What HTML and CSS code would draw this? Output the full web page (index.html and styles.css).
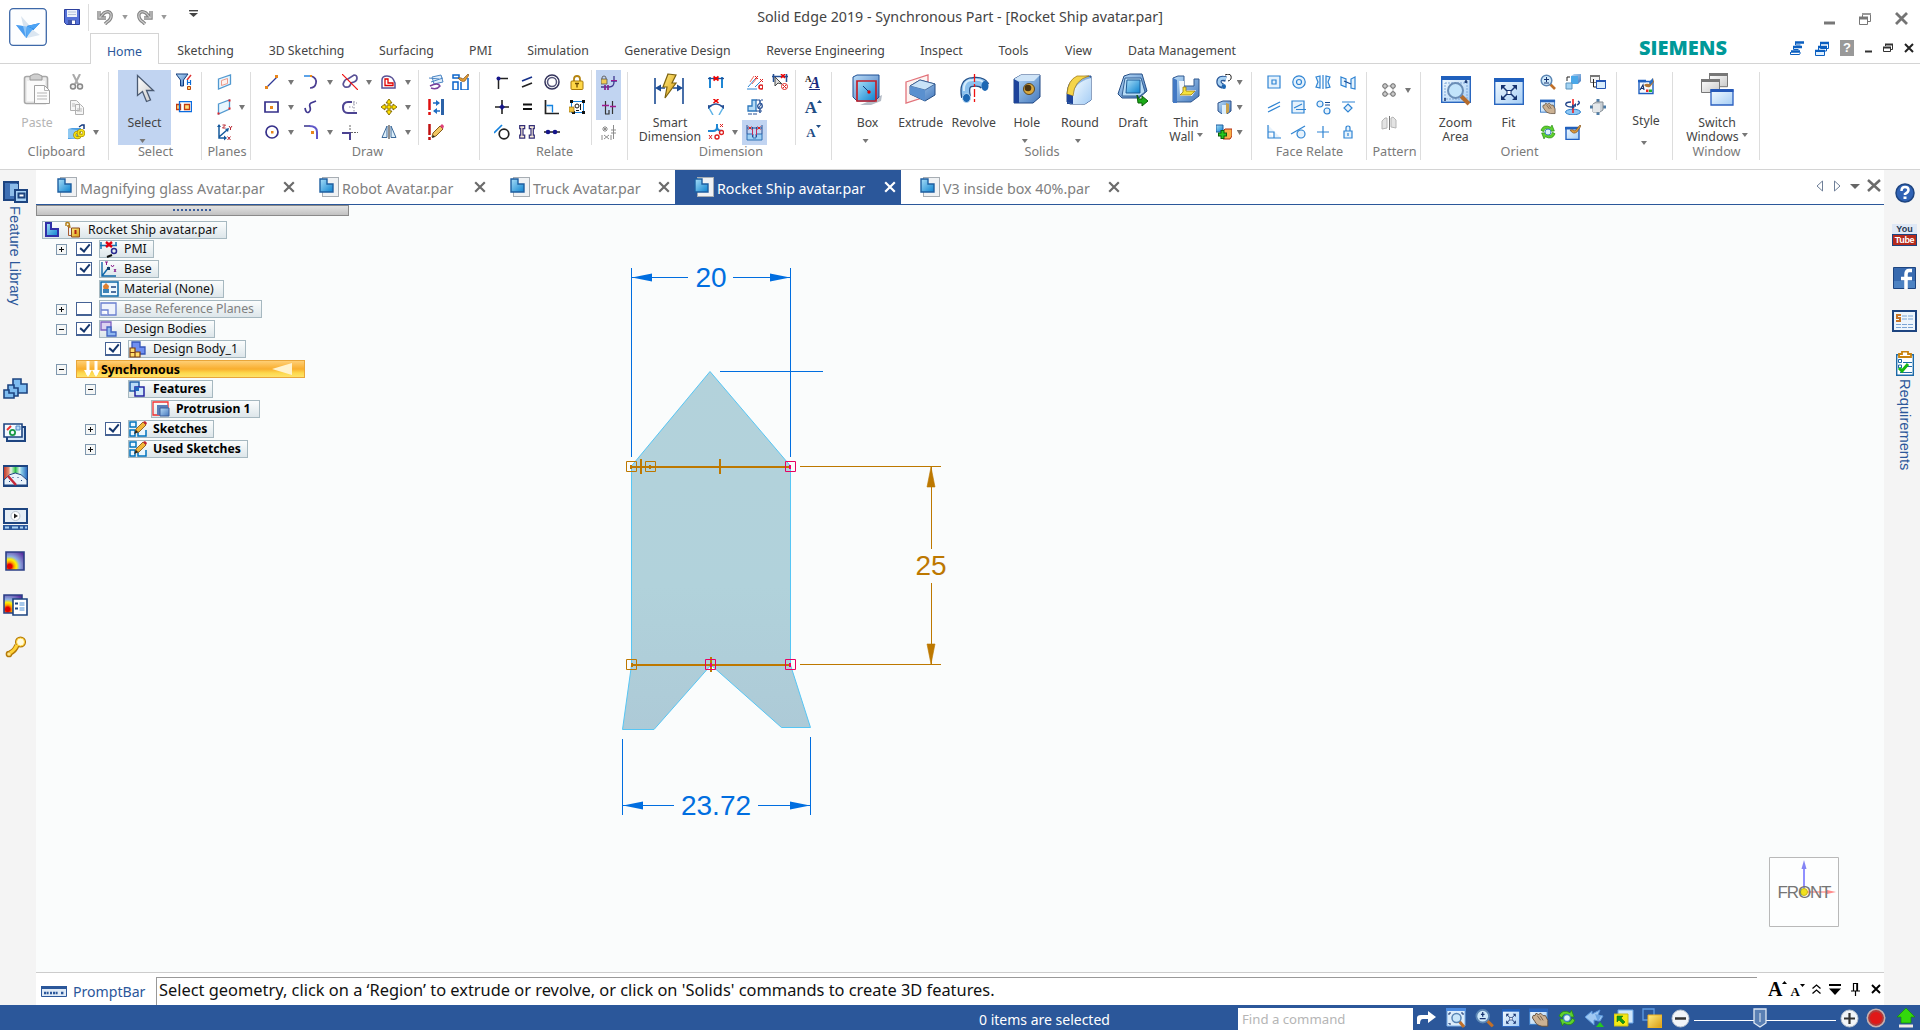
FILE: index.html
```html
<!DOCTYPE html>
<html lang="en">
<head>
<meta charset="utf-8">
<title>Solid Edge 2019 - Synchronous Part - [Rocket Ship avatar.par]</title>
<link rel="stylesheet" href="styles.css">
</head>
<body>
<svg class="defs" width="0" height="0" aria-hidden="true">
  <defs>
    <linearGradient id="lb" x1="0" y1="0" x2="1" y2="1"><stop offset="0" stop-color="#f4fbff"/><stop offset="1" stop-color="#a5cdf5"/></linearGradient>
    <linearGradient id="mb" x1="0" y1="0" x2="1" y2="1"><stop offset="0" stop-color="#b9dcf8"/><stop offset="1" stop-color="#4478bd"/></linearGradient>
    <linearGradient id="cy" x1="0" y1="0" x2="1" y2="1"><stop offset="0" stop-color="#a9def8"/><stop offset="1" stop-color="#0c82cf"/></linearGradient>
    <linearGradient id="gr" x1="0" y1="0" x2="1" y2="1"><stop offset="0" stop-color="#ffffff"/><stop offset="1" stop-color="#c9c9c9"/></linearGradient>
    <linearGradient id="ye" x1="0" y1="0" x2="1" y2="1"><stop offset="0" stop-color="#ffec80"/><stop offset="1" stop-color="#d79a12"/></linearGradient>
    <linearGradient id="body" x1="0" y1="0" x2="0" y2="1"><stop offset="0" stop-color="#b3d2db"/><stop offset=".6" stop-color="#b1d2db"/><stop offset="1" stop-color="#adcad7"/></linearGradient>
    <radialGradient id="heat" cx=".2" cy=".8" r="1"><stop offset=".12" stop-color="#e00000"/><stop offset=".24" stop-color="#ff9d00"/><stop offset=".38" stop-color="#fff200"/><stop offset=".55" stop-color="#8fb0e0"/><stop offset="1" stop-color="#5b2fa0"/></radialGradient>
    <linearGradient id="rainbow"><stop offset="0" stop-color="#c0392b"/><stop offset=".2" stop-color="#e08a70"/><stop offset=".3" stop-color="#e9f4ea"/><stop offset=".5" stop-color="#2fbf4a"/><stop offset=".68" stop-color="#d8f0ee"/><stop offset=".75" stop-color="#8ed0e8"/><stop offset="1" stop-color="#2b6cc0"/></linearGradient>
    <symbol id="mag" viewBox="0 0 16 16"><path d="M10 10l5 5" stroke="#c0702a" stroke-width="2.6"/><circle cx="6.500" cy="6.500" r="5.300" fill="#cfe9fa" stroke="#5b86b4" stroke-width="1.500"/></symbol>
    <symbol id="part" viewBox="0 0 20 20"><rect x="3.500" y=".5" width="16" height="19" fill="#f0f2f4" stroke="#a7adb3"/><path d="M1 2h7v5h6v8H1z" fill="url(#cy)" stroke="#1f5fa0" stroke-width="1.400"/></symbol>
    <symbol id="recycle" viewBox="0 0 16 16"><g transform="rotate(30 8 8)"><path d="M1 10Q0 3 8 2.500V0l5 4-5 3V5Q3 5 4 10zM15 6q1 7-7 7.500V16l-5-4 5-3v2q5 0 4-5z" fill="#5ed02e" stroke="#218a0c" stroke-width=".6"/></g><circle cx="8" cy="8" r="3" fill="#dff1fb" stroke="#3d85c0"/></symbol>
    <symbol id="cross" viewBox="0 0 10 10"><path d="M1 1l8 8M9 1L1 9" stroke="currentColor" stroke-width="1.800"/></symbol>
    <symbol id="handwin" viewBox="0 0 18 16"><rect x=".5" y=".5" width="15" height="13" fill="url(#lb)" stroke="#3f7cc4"/><path d="M0 0h16v3H0z" fill="#2a66bf"/><path d="M3 8q0-3 2-2l1-2 2 1 2-1 2 2 2 0 2 4v5h-5Q6 14 5 11z" fill="#cbb193" stroke="#5f4d3c" stroke-width=".8"/><path d="M7 6l3 4M9.500 6l2.500 4" stroke="#5f4d3c" stroke-width=".7"/></symbol>
    <symbol id="fitwin" viewBox="0 0 30 27"><rect x=".7" y=".7" width="28.600" height="25.600" fill="url(#lb)" stroke="#2a66bf" stroke-width="1.400"/><path d="M0 0h30v4H0z" fill="#2060bd"/><path d="M9 9l4 4M21 9l-4 4M9 20l4-4M21 20l-4-4" stroke="#163370" stroke-width="1.500"/><path d="M7 7h5L7 12zM23 7v5l-5-5zM7 22v-5l5 5zM23 22h-5l5-5z" fill="#163370"/><rect x="13" y="12.500" width="4" height="4" fill="#fff" stroke="#163370"/></symbol>
    <symbol id="sketch" viewBox="0 0 18 16"><path d="M1 1h6v5H1zM1 9h5v6H1zM9 9v6h8V9" fill="#eaf6fd" stroke="#0073bd" stroke-width="1.500"/><path d="M6 12l1-4 7-7 3 3-7 7z" fill="#f2b63a" stroke="#7b4a10" stroke-width=".8"/><path d="M14 1l2-1 2 2-1 2z" fill="#c5252f"/><path d="M5 13l2-4 2 2z" fill="#222"/></symbol>
  </defs>
</svg>

<div class="app">
  <header class="title">
    <div class="quick">
      <svg class="q-save" width="16" height="16"><path d="M.5.5h15v15h-13l-2-2z" fill="#5572d8" stroke="#2c3f9c"/><path d="M3 1h10v7H3z" fill="#eef3fb"/><path d="M4 3h8M4 5.500h8" stroke="#b5c3da"/><path d="M4 11h8v4H4z" fill="#4156a8"/><path d="M8 11.500h3V15H8z" fill="#fff"/></svg>
      <i class="q-sep"></i>
      <svg class="q-undo" width="17" height="16"><path d="M2 2v7h7M3 8.500L7 4q5-3 7 1 1 5-4 8l-2 2" fill="none" stroke="#858585" stroke-width="3.400"/><path d="M2 2v7h7M3 8.500L7 4q5-3 7 1 1 5-4 8l-2 2" fill="none" stroke="#d0d0d0" stroke-width="1.100"/></svg>
      <i class="arr light"></i>
      <svg class="q-redo" width="17" height="16"><g transform="translate(17 0) scale(-1 1)"><path d="M2 2v7h7M3 8.500L7 4q5-3 7 1 1 5-4 8l-2 2" fill="none" stroke="#858585" stroke-width="3.400"/><path d="M2 2v7h7M3 8.500L7 4q5-3 7 1 1 5-4 8l-2 2" fill="none" stroke="#d0d0d0" stroke-width="1.100"/></g></svg>
      <i class="arr light"></i>
      <svg class="q-more" width="9" height="7"><path d="M0 .7h9" stroke="#444" stroke-width="1.400"/><path d="M0 3h9L4.500 7z" fill="#444"/></svg>
    </div>
    <h1>Solid Edge 2019 - Synchronous Part - [Rocket Ship avatar.par]</h1>
    <div class="winctl">
      <svg width="11" height="12"><path d="M0 10h11" stroke="#777" stroke-width="3"/></svg>
      <svg width="12" height="14"><path d="M3.500 5V1.500h8v8H9" fill="none" stroke="#777"/><path d="M3 2h9" stroke="#999" stroke-width="2"/><path d="M.5 5.500h8v7h-8z" fill="#fff" stroke="#777"/><path d="M0 6h9" stroke="#777" stroke-width="3"/></svg>
      <svg width="13" height="13"><path d="M1 1l11 11M12 1L1 12" stroke="#747474" stroke-width="2.800"/></svg>
    </div>
  </header>

  <svg class="logo" width="38" height="38"><rect x=".7" y=".7" width="36.600" height="36.600" rx="3.500" fill="#fdfeff" stroke="#3d68a8" stroke-width="1.300"/><path d="M12 8l9 10-4 12z" fill="#d8e3ef"/><path d="M7 17l14 2-3 11z" fill="#8cc4f7"/><path d="M7 17l10 13-3-12z" fill="#4b9df0"/><path d="M18 18l13-3-14 15z" fill="#1778e2"/><path d="M18 18l13-3-6 6z" fill="#4ca3f5"/><path d="M21 20l10 7-13 3z" fill="#dbe6f1"/><path d="M18 18l6 3-7 9z" fill="#57aaf5"/></svg>

  <nav class="tabs">
    <a class="on">Home</a><a class="t2">Sketching</a><a class="t3">3D Sketching</a><a class="t4">Surfacing</a><a class="t5">PMI</a><a class="t6">Simulation</a><a class="t7">Generative Design</a><a class="t8">Reverse Engineering</a><a class="t9">Inspect</a><a class="t10">Tools</a><a class="t11">View</a><a class="t12">Data Management</a>
    <b class="siemens">SIEMENS</b>
    <div class="mdi">
      <svg width="14" height="15"><path d="M5 1.500h9M3 6h9M1 10.500h9" stroke="#0b5fc0" stroke-width="2.600"/><path d="M5.500 2v2h5M3.500 7v1.500h5M.5 11v2.500h9l1-2" fill="none" stroke="#0b5fc0"/></svg>
      <svg width="14" height="15"><path d="M5.500 1.500h8v6h-8z" fill="#fff" stroke="#0b5fc0"/><path d="M5 2h9M3 6h9M0 10h10" stroke="#0b5fc0" stroke-width="2.600"/><path d="M3.500 6h8v4h-8z" fill="none" stroke="#0b5fc0"/><path d="M.5 10h9v4.500h-9z" fill="#dff0ff" stroke="#0b5fc0"/><path d="M0 10h10" stroke="#0b5fc0" stroke-width="2"/></svg>
      <span class="help">?</span>
      <svg width="7" height="12"><path d="M0 9.500h7" stroke="#333" stroke-width="2"/></svg>
      <svg width="10" height="10"><path d="M2.500 3V1.500h7v5H8" fill="none" stroke="#333"/><path d="M2 1.500h8" stroke="#333" stroke-width="2"/><path d="M.5 4.500h7v4h-7z" fill="#fff" stroke="#333"/><path d="M0 4.500h8" stroke="#333" stroke-width="2"/></svg>
      <svg width="10" height="10"><path d="M1 1l8 8M9 1L1 9" stroke="#222" stroke-width="2"/></svg>
    </div>
  </nav>

  <section class="ribbon">
    <div class="group clip">
      <div class="body">
        <div class="big dim"><svg width="28" height="33"><rect x="1.500" y="3.500" width="23" height="27" rx="2" fill="#ececec" stroke="#a8a8a8" stroke-width="1.600"/><path d="M7 7V3l4-2h4l4 2v4z" fill="#cfcfcf" stroke="#999"/><path d="M4 8h18v20H4z" fill="#fafafa"/><path d="M11.500 12.500h10l5 5v13h-15z" fill="#fcfcfc" stroke="#a0a0a0"/><path d="M21.500 12.500v5h5M14 20h10M14 23h10M14 26h10" fill="none" stroke="#b5b5b5"/></svg><span>Paste</span></div>
        <div class="grid">
          <svg width="16" height="16"><path d="M4 0l5 10M11 0L6 10" stroke="#aaa" stroke-width="2"/><circle cx="4" cy="12.500" r="2.500" fill="#eee" stroke="#888" stroke-width="1.500"/><circle cx="11" cy="12.500" r="2.500" fill="#eee" stroke="#888" stroke-width="1.500"/></svg><i></i>
          <svg width="16" height="16"><path d="M1.500 1.500h6l3 3v7h-9zM6.500 5.500h5l3 3v7h-8z" fill="#f6f6f6" stroke="#b0b0b0"/><path d="M8 10h5M8 12h5M3 5h3M3 7h3" stroke="#bbb"/></svg><i></i>
          <svg width="17" height="16"><path d="M0 5l4-1h9v10l-3 1H0z" fill="#4d9fe2"/><path d="M0 5l9 1v9l-9-1z" fill="#8fc9f2"/><path d="M11 3l3-2h2v4" fill="none" stroke="#143a80" stroke-width="1.500"/><circle cx="9.500" cy="11" r="2.800" fill="none" stroke="#a98b00" stroke-width="3"/><circle cx="9.500" cy="11" r="2.800" fill="none" stroke="#f3e214" stroke-width="1.500"/><circle cx="13" cy="9" r="2.800" fill="none" stroke="#a98b00" stroke-width="2.600"/><circle cx="13" cy="9" r="2.800" fill="none" stroke="#f3e214" stroke-width="1.400"/></svg><i class="arr"></i>
        </div>
      </div>
      <h2>Clipboard</h2>
    </div>

    <div class="group sel">
      <div class="body">
        <div class="big hot"><svg width="18" height="30"><path d="M1.500 1.500v20l5-4 4 10 4-1.500-4-9.500 7 0z" fill="url(#gr)" stroke="#4a5a72" stroke-width="1.300"/></svg><span>Select</span><i class="arr"></i></div>
        <div class="grid">
          <svg width="16" height="18"><path d="M0 1h12L7.500 7v6h-3V7z" fill="url(#mb)" stroke="#123c7c"/><path d="M15 2l-4 5" stroke="#d33" stroke-width="1.500"/><path d="M11.500 7v5M14.500 7v5M11 9.500h4" stroke="#0a6cd6" stroke-width="1.200"/><path d="M11.500 13.500h3v3h-3z" fill="#ffd56a" stroke="#b5460f"/></svg>
          <svg width="16" height="12"><path d="M.5 3.500h4v5h-4zM8.500 3.500h5v5h-5z" fill="#ffdd7a" stroke="#c23a10" stroke-width="1.300"/><path d="M3.500.7h12v10h-12z" fill="none" stroke="#0a6be0" stroke-width="1.300"/></svg>
          <i></i>
        </div>
      </div>
      <h2>Select</h2>
    </div>

    <div class="group planes">
      <div class="body"><div class="grid">
        <svg width="15" height="16"><path d="M1.500 5l12-4v9l-12 5z" fill="#eaf6fe" stroke="#5299d0" stroke-width="1.300"/><path d="M4.500 6.500l6-2v5l-6 2z" fill="#fff2ee" stroke="#eb9b8c"/></svg><i></i>
        <svg width="15" height="16"><path d="M1.500 5l11-4v9l-11 5z" fill="#eaf6fe" stroke="#5299d0" stroke-width="1.300"/><path d="M11.500.5h2v2h-2zM11.500 8.500h2v2h-2zM.5 13.500h2v2H.5z" fill="#e22"/></svg><i class="arr"></i>
        <svg width="16" height="17"><path d="M2 1v13h6M2 13l8-7" fill="none" stroke="#15599c" stroke-width="1.500"/><path d="M0 3l2-3 2 3zM7 11.500v5l3-2.500zM8 5l4-1-1 4z" fill="#15599c"/><path d="M5.500 1h3l-3 3h3M12 2l1.500 2L15 2M13.500 4v2M10.500 12.500l3 3.500M13.500 12.500l-3 3.500" fill="none" stroke="#b72630"/></svg><i></i>
      </div></div>
      <h2>Planes</h2>
    </div>

    <div class="group draw">
      <div class="body"><div class="grid">
        <svg width="14" height="14"><path d="M2 12L12 2" stroke="#303a96" stroke-width="1.300"/><path d="M0 11h3v3H0zM10 0h3v3h-3z" fill="#e8861c"/></svg><i class="arr"></i>
        <svg width="16" height="14"><path d="M1 1h7" stroke="#2685e0" stroke-width="1.500"/><path d="M8 1q6 2 5 7-1 5-6 5" fill="none" stroke="#4c3f92" stroke-width="1.700"/><path d="M7 0h2v2H7z" fill="#f08a10"/></svg><i class="arr"></i>
        <svg width="16" height="16"><path d="M3 13q-3-2-1-5 1-3 4-3l6-4q3 0 3 3t-3 4l-3 1q-1 5-6 4z" fill="none" stroke="#5a5296" stroke-width="1.700"/><path d="M0 0l16 16" stroke="#f01010" stroke-width="1.200"/></svg><i class="arr"></i>
        <svg width="15" height="14"><path d="M1 13V5q0-4 5-4 6 0 8 7v5z" fill="#fff" stroke="#5a5296" stroke-width="1.500"/><path d="M4 10.500V4h3v4h5v2.500z" fill="#fff" stroke="#e00000" stroke-width="1.300"/></svg><i class="arr"></i>
        <svg width="15" height="12"><path d="M1 11V1h13v10z" fill="#fff" stroke="#36308a" stroke-width="1.700"/><path d="M6 5h3v3H6z" fill="#e8861c"/></svg><i class="arr"></i>
        <svg width="13" height="14"><path d="M1 8q1 6 4 4 2-1 1-5-1-3 1-4l5-2" fill="none" stroke="#3f3790" stroke-width="1.700"/></svg><i></i>
        <svg width="16" height="13"><path d="M10 1H6Q1 1 1 6.500T6 12h9" fill="none" stroke="#4c4392" stroke-width="2"/><path d="M12 0v11M7 6h4M11 2h4" stroke="#8a8aa0" stroke-dasharray="1.500 1.500"/></svg><i></i>
        <svg width="16" height="16"><path d="M8 0l3 4H9v3h3V5l4 3-4 3V9H9v3h2l-3 4-3-4h2V9H4v2L0 8l4-3v2h3V4H5z" fill="#ffe000" stroke="#7d6500" stroke-width=".9"/></svg><i class="arr"></i>
        <svg width="14" height="14"><circle cx="7" cy="7" r="6" fill="#fff" stroke="#36308a" stroke-width="1.700"/><path d="M6 6h2.500v2.500H6z" fill="#e8861c"/></svg><i class="arr"></i>
        <svg width="16" height="14"><path d="M1 1h6" stroke="#36308a" stroke-width="1.500"/><path d="M6 1q8 0 8 6v7" fill="none" stroke="#5f57c8" stroke-width="2"/><path d="M8 6h3v3H8z" fill="#e8861c"/></svg><i class="arr"></i>
        <svg width="16" height="15"><path d="M0 8h8v7" fill="none" stroke="#4c4392" stroke-width="2"/><path d="M8 0v6M9 7.500h7" stroke="#666" stroke-dasharray="2 1"/></svg><i></i>
        <svg width="16" height="14"><path d="M1 12.500L6 1v11.500zM15 12.500L10 1v11.500z" fill="#dceef9" stroke="#3d6a9a"/><path d="M8 0v14" stroke="#222"/></svg><i class="arr"></i>
      </div><i class="vs"></i><div class="grid two">
        <svg width="16" height="16"><path d="M4 3l9-2 2 7-9 2zM1 4l10 1M3 8l12-4" fill="#e2effb" stroke="#4c86c4"/><path d="M2 12q8-4 10 0-3 4-9 2" fill="none" stroke="#7a3f9c" stroke-width="1.500"/></svg>
        <svg width="17" height="16"><path d="M1 1h6v3H1zM1 8h5v8H1zM9 8v8h7V4" fill="#fff" stroke="#0b64ca" stroke-width="1.500"/><path d="M6 4q3-1 5 1l5-5 1 1-4 6q-3 2-7-3z" fill="#e09a30" stroke="#754310" stroke-width=".6"/></svg>
        <svg width="16" height="16"><path d="M1.500 0v11M1.500 13v3" stroke="#e01010" stroke-width="2.500"/><path d="M14.500 0v16" stroke="#2b62a8" stroke-width="3"/><path d="M5 4h6M12 12H6" stroke="#1f6ec4" stroke-width="1.600"/><path d="M8 1l4 3-4 3zM9 9l-4 3 4 3z" fill="#1f6ec4"/></svg><i></i>
        <svg width="16" height="16"><path d="M1.500 0v11M1.500 13v3" stroke="#c01010" stroke-width="2.500"/><path d="M4 13l1-4 7-7 3 3-7 7z" fill="#f1c763" stroke="#855b18"/><path d="M12 2l2-2 2 2-1 3z" fill="#e0407a"/><path d="M4 14l1-3 2 2z" fill="#222"/></svg><i></i>
      </div></div>
      <h2>Draw</h2>
    </div>

    <div class="group relate">
      <div class="body"><div class="grid">
        <svg width="12" height="13"><path d="M2.500 13V2.500H12" fill="none" stroke="#222" stroke-width="1.500"/><circle cx="2.500" cy="2.500" r="2" fill="#16168a"/></svg>
        <svg width="12" height="12"><path d="M1 5l10-4" stroke="#15308a" stroke-width="1.600"/><path d="M1 11l10-4" stroke="#222" stroke-width="1.600"/></svg>
        <svg width="16" height="16"><circle cx="8" cy="8" r="7" fill="#fff" stroke="#33335c" stroke-width="1.500"/><circle cx="8" cy="8" r="4.500" fill="#fff" stroke="#55557a" stroke-width="1.500"/></svg>
        <svg width="14" height="15"><path d="M4 6V4q0-3 3-3t3 3v2" fill="none" stroke="#b58512" stroke-width="1.800"/><rect x="1" y="6" width="12" height="8.500" rx="1" fill="#ffd848" stroke="#a87a0a"/><path d="M5 8.500h4M7 9v3.500" stroke="#6b4b00" stroke-width="1.300"/></svg>
        <svg width="14" height="14"><path d="M0 7h14M7 0v14" stroke="#222" stroke-width="1.600"/><path d="M4 7l3-3 3 3-3 3z" fill="#16168a"/></svg>
        <svg width="10" height="8"><path d="M1 1.500h9M1 6h9" stroke="#111" stroke-width="2"/></svg>
        <svg width="15" height="15"><path d="M1.500 0v13.500H15" fill="none" stroke="#222" stroke-width="1.700"/><path d="M2.500 5.500h6v7" fill="#e4f3fd" stroke="#1583e0" stroke-width="1.300"/></svg>
        <svg width="16" height="16"><rect x="2.500" y="2.500" width="12" height="11" fill="#fff" stroke="#1583e0"/><path d="M1 1h3v3H1zM13 1h3v3h-3zM13 12h3v3h-3zM3 12h3v3H3z" fill="#111"/><circle cx="8" cy="7" r="2" fill="none" stroke="#111"/><path d="M11.500 5v6M7 11.500h3" stroke="#111"/><path d="M0 8h5v5H0z" fill="#efc13c" stroke="#9b7310" stroke-width=".7"/></svg>
        <svg width="16" height="16"><path d="M0 9l8-8" stroke="#1583e0" stroke-width="1.700"/><circle cx="10" cy="10" r="4.800" fill="#fff" stroke="#222" stroke-width="1.700"/></svg>
        <svg width="16" height="14"><path d="M.7.7h5v3H4v6.500h1.700v3h-5v-3h1V3.700h-1zM15.300.7h-5v3H12v6.500h-1.700v3h5v-3h-1V3.700h1z" fill="#f7ead8" stroke="#342f78" stroke-width="1.200"/></svg>
        <svg width="16" height="8"><path d="M0 4h16" stroke="#111" stroke-width="1.400"/><circle cx="4" cy="4" r="2.300" fill="#16168a"/><circle cx="11" cy="4" r="2.300" fill="#16168a"/></svg>
        <i></i>
      </div><i class="vs"></i><div class="grid one">
        <span class="hl"><svg width="16" height="16"><path d="M3 4.500V3q0-2 2-2t2 2v2" transform="translate(-2 0)" fill="none" stroke="#666"/><path d="M0 4h6v5H0z" fill="#f2cb55" stroke="#555" stroke-width=".8"/><path d="M13 1v6q0 5-5 5H0M10 6h6M4 10v5M7 10v5" fill="none" stroke="#3f3790" stroke-width="1.300"/><path d="M4 10v5M7 10v5M10 5.500h6" stroke="#a01a90" stroke-width="1.200"/></svg></span>
        <span class="hl"><svg width="14" height="14"><path d="M3.500 0v13M10.500 0v13M3 13h4v-4" fill="none" stroke="#333" stroke-width="1.200"/><path d="M0 4.500h7M8 5.500h6" stroke="#a01a90" stroke-width="1.600"/></svg></span>
        <svg width="16" height="15"><path d="M1 4h6M4 1v6M2 2l4 4M6 2L2 6M12.500 0v14M10 5h5M10 8h5M1 10v5M10 10v5M3 10l5 4M8 10l-5 4" fill="none" stroke="#8c8c8c"/></svg>
      </div></div>
      <h2>Relate</h2>
    </div>

    <div class="group dimn">
      <div class="body">
        <div class="big"><svg width="30" height="31"><path d="M1 4v26M29 4v26" stroke="#1c4c94" stroke-width="1.600"/><path d="M3 14h8M19 14h8" stroke="#1c4c94" stroke-width="1.500"/><path d="M1 14l6-3.500v7zM29 14l-6-3.500v7z" fill="#1c4c94"/><path d="M14 0l8 1-4 8h4L11 24l2-11H9z" fill="url(#ye)" stroke="#7c6210" stroke-width="1.200"/></svg><span>Smart<br>Dimension</span></div>
        <div class="grid">
          <svg width="16" height="14"><path d="M2 2v11M14 2v11" stroke="#1f87d4" stroke-width="2"/><path d="M0 3.500h16" stroke="#254f94" stroke-width="1.300"/><path d="M5.500 1.500l5 4M10.500 1.500l-5 4" stroke="#e00" stroke-width="1.800"/></svg><i></i>
          <svg width="16" height="15"><path d="M1 12L8 4M8 12l5-5M0 14h10" stroke="#2c85d4"/><path d="M3 7l4-6M5 9l5-6" stroke="#ee6b60"/><path d="M8 1l3 3M11 1L8 4M13 4l3 3M16 4l-3 3" stroke="#d22" stroke-width="1"/><circle cx="14" cy="12" r="2" fill="none" stroke="#d22" stroke-width="1.600"/></svg>
          <svg width="16" height="16"><path d="M0 2.500h16M1.500 0v8M14.500 0v8" stroke="#254f94" stroke-width="1.500"/><path d="M9 0l4 4M13 0L9 4" stroke="#e00" stroke-width="1.500"/><path d="M3 3v9l3-3 4 1z" fill="#ddd" stroke="#444"/><circle cx="12.500" cy="12.500" r="3" fill="#fff" stroke="#d22"/><path d="M11 11l3 3M14 11l-3 3" stroke="#d22"/></svg>
          <svg width="16" height="16"><path d="M1 9l4 7M15 9l-4 7" stroke="#5cb2e6" stroke-width="1.500"/><path d="M0 9q8-8 16 0" fill="none" stroke="#254f94" stroke-width="1.500"/><path d="M0 10V6l4 1zM16 10V6l-4 1z" fill="#254f94"/><path d="M5.500 0l5 4M10.500 0l-5 4" stroke="#e00" stroke-width="1.600"/></svg><i></i>
          <svg width="16" height="16"><path d="M5 1h4v11H1V7h4z" fill="#b7dcf6" stroke="#2c78bd" stroke-width="1.300"/><path d="M9 1h7M9 12h6M1 15h9" stroke="#254f94" stroke-dasharray="4 1"/><path d="M13 1v3M13 10v4" stroke="#254f94" stroke-width="1.500"/><circle cx="13" cy="7" r="2.300" fill="none" stroke="#254f94" stroke-width="1.300"/><path d="M11 10l4-6" stroke="#254f94"/></svg><i></i>
          <svg width="16" height="16"><path d="M0 7h5q4 0 4-4V0M9 3q0 4 6 4" fill="none" stroke="#1f87d4" stroke-width="2"/><path d="M12 0l3 3M15 0l-3 3M1 11l3 4M4 11l-3 4" stroke="#d22"/><circle cx="13.500" cy="8.500" r="2" fill="#fff" stroke="#d22" stroke-width="1.400"/><circle cx="9" cy="13" r="2" fill="#fff" stroke="#d22" stroke-width="1.400"/></svg><i class="arr"></i>
          <span class="hl"><svg width="17" height="16"><path d="M1 9h6v4h3V9h6v6H1z" fill="#9ed0f4" stroke="#2c6fb4"/><path d="M1 0v9M6.500 2v10M10.500 2v10M16 0v9M1 3h15" fill="none" stroke="#254f94"/><path d="M6.500 4v6M10.500 4v6" stroke="#c22a5a"/><path d="M2.500 1.500l3 3M5.500 1.500l-3 3M11.500 1.500l3 3M14.500 1.500l-3 3" stroke="#d22"/></svg></span><i></i>
        </div>
        <i class="vs"></i>
        <div class="grid one serif">
          <span class="fa"><b>A</b><b>A</b></span>
          <span class="fb2"><b>A</b><svg width="5" height="3"><path d="M0 3h5L2.500 0z"/></svg></span>
          <span class="fb2 small"><b>A</b><svg width="5" height="3"><path d="M0 0h5L2.500 3z"/></svg></span>
        </div>
      </div>
      <h2>Dimension</h2>
    </div>

    <div class="group solids">
      <div class="body">
        <div class="big"><svg width="32" height="31"><path d="M20 26l10-5-1 6-10 4H8z" fill="#b5bcc6"/><path d="M1 3l4-2h22v22l-4 4H5l-4-4z" fill="url(#mb)" stroke="#1d4f94"/><path d="M5 7h19v20H5z" fill="url(#cy)" stroke="#c21f2a" stroke-width="1.700"/><path d="M11 12l6 6" stroke="#123a7c"/><circle cx="17" cy="18" r="1.700" fill="#d00"/></svg><span>Box</span><i class="arr"></i></div>
        <div class="big"><svg width="31" height="30"><path d="M1 8L23 1v21L1 29z" fill="#fdf3f1" stroke="#e2737b" stroke-width="1.300"/><path d="M5 12l10-6 15 4v11l-10 6-15-7z" fill="url(#mb)" stroke="#264f86"/><path d="M5 12l10-6 15 4-10 6z" fill="#c9e3f8" stroke="#264f86" stroke-width=".7"/><path d="M5 12l15 4v11L5 20z" fill="#5a90cf"/></svg><span>Extrude</span></div>
        <div class="big"><svg width="30" height="30"><path d="M7 23Q4 8 14 8q9-1 12 4" fill="none" stroke="#234f88" stroke-width="10"/><path d="M7 22Q4 8 14 8q9-1 12 4" fill="none" stroke="#8cc1ee" stroke-width="7.500"/><path d="M5 17Q4 6 14 6q7-1 10 2" fill="none" stroke="#d5ecfb" stroke-width="2"/><ellipse cx="26" cy="12" rx="3.500" ry="5" fill="#1d68b4"/><ellipse cx="7.500" cy="24" rx="4" ry="4.500" fill="#1d68b4" stroke="#b7d9f5"/><path d="M15.500 0v30" stroke="#e11" stroke-width="1.300" stroke-dasharray="8 2 3 2"/></svg><span>Revolve</span></div>
        <div class="big"><svg width="28" height="30"><path d="M1 5l7-4h19v22l-7 6H1z" fill="url(#mb)" stroke="#1f4684"/><path d="M1 5l5 3v21H1z" fill="#1e449a"/><path d="M1 5l7-4h19l-6 6H6z" fill="#cfe4f7"/><circle cx="16" cy="15" r="5.500" fill="#d9a940" stroke="#5b4822"/><circle cx="15" cy="14" r="3.300" fill="#4a3410"/></svg><span>Hole</span><i class="arr"></i></div>
        <div class="big"><svg width="30" height="31"><path d="M2 20h5v10H2z" fill="#1e449a"/><path d="M2 21Q2 7 12 3l14-1v24l-6 4H5l-3-2z" fill="url(#mb)" stroke="#1f4684"/><path d="M8 22Q9 8 26 4v22l-6 4H8z" fill="url(#lb)"/><path d="M2 20Q3 6 12 2h12Q9 6 8 22z" fill="#f5d54a" stroke="#a8801c" stroke-width=".8"/><path d="M2 20l6 2v8l-6-2z" fill="#1e449a"/></svg><span>Round</span><i class="arr"></i></div>
        <div class="big"><svg width="32" height="31"><path d="M7 2l6-2h12l5 17-8 7H5l-4-4z" fill="url(#mb)" stroke="#264f86"/><path d="M8 4h16l4 14-5 4H5z" fill="#b7dcf6" stroke="#335f94"/><path d="M10 6h13v13H9z" fill="url(#cy)" stroke="#1f5b97"/><path d="M20 21l2 4h3v-3l6 5-6 5v-3h-4z" fill="#1cab18" stroke="#0a5c08"/></svg><span>Draft</span></div>
        <div class="big"><svg width="28" height="29"><path d="M1 4l5-2h6v10h10V5h5v17l-8 6H1z" fill="url(#mb)" stroke="#30588f"/><path d="M1 4l4 2v23H1z" fill="#4379c4"/><path d="M7 7h5v9h12l-4 6H8z" fill="#eef6fd"/><path d="M11 13h3v4h9l-4 4H8l3-3z" fill="#f5e23c" stroke="#987a10" stroke-width=".8"/></svg><span>Thin<br>Wall <i class="arr in"></i></span></div>
        <div class="grid">
          <svg width="16" height="16"><path d="M10 5Q3 3 3 8q0 3 4 4" fill="none" stroke="#2a5898" stroke-width="5.500"/><path d="M10 4.500Q3 3 3 8q0 2 3 3.500" fill="none" stroke="#a9d2f3" stroke-width="3"/><ellipse cx="8" cy="12.500" rx="2" ry="2.500" fill="#1d68b4"/><path d="M9 1q5-2 6 1M12 7q4-1 3-5" fill="none" stroke="#222"/></svg><i class="arr"></i>
          <svg width="15" height="14"><path d="M1 3l5-2h8v10l-4 3H5l-4-3z" fill="url(#mb)" stroke="#2a4f88"/><path d="M5 5h5v9H5z" fill="#dceefb"/><path d="M9 3l3 1v8l-3 2z" fill="#c9a04a"/></svg><i class="arr"></i>
          <svg width="16" height="16"><path d="M0 1h7v7H0z" fill="url(#cy)" stroke="#1e5ea0"/><path d="M7 7l2-2h7v7l-2 3H7z" fill="#f6b04a" stroke="#b02a14"/><path d="M6.500 6v9M2 10.500h9" stroke="#0a5c08" stroke-width="4"/><path d="M6.500 7v7M3 10.500h7" stroke="#25c81e" stroke-width="2"/></svg><i class="arr"></i>
        </div>
      </div>
      <h2>Solids</h2>
    </div>

    <div class="group face">
      <div class="body"><div class="grid ln">
        <svg width="14" height="14"><path d="M1 1h12v12H1zM5 5h4v4H5z"/></svg>
        <svg width="14" height="14"><circle cx="7" cy="7" r="6.200"/><circle cx="7" cy="7" r="2.500"/></svg>
        <svg width="16" height="14"><path d="M8 0v14M1 2l4-1v12l-4-1 2-5zM15 2l-4-1v12l4-1-2-5z"/></svg>
        <svg width="16" height="15"><path d="M1 2l5 2v8l-5-2zM15 2l-4 2v9l4 1z"/><path d="M4 6l7 3" stroke="#164a92"/></svg>
        <svg width="14" height="12"><path d="M1 7l12-6M1 11l12-6"/></svg>
        <svg width="15" height="14"><path d="M1 1h12v12H1zM3 8l8-4M5 9.500h10"/></svg>
        <svg width="15" height="15"><circle cx="4" cy="4" r="3"/><circle cx="11" cy="11" r="3"/><path d="M9 2.500h5M9 5h5" stroke="#164a92"/></svg>
        <svg width="14" height="12"><path d="M1 1h13M7 3l4 4-4 4-4-4z"/></svg>
        <svg width="15" height="14"><path d="M1 0v13h13M1 7h6v6"/></svg>
        <svg width="15" height="14"><path d="M0 9l14-8"/><circle cx="10" cy="9" r="4"/></svg>
        <svg width="12" height="12"><path d="M6 0v12M0 6h12"/></svg>
        <svg width="10" height="14"><path d="M1 6h8v7H1zM3 6V3q0-2 2-2t2 2v3M5 8v3"/></svg>
      </div></div>
      <h2>Face Relate</h2>
    </div>

    <div class="group pattern">
      <div class="body"><div class="grid">
        <svg width="14" height="14"><path d="M3 3h8v8H3z" fill="none" stroke="#aaa"/><g fill="#c9c9c9" stroke="#666"><circle cx="3" cy="3" r="2.300"/><circle cx="11" cy="3" r="2.300"/><circle cx="3" cy="11" r="2.300"/><circle cx="11" cy="11" r="2.300"/></g></svg><i class="arr"></i>
        <svg width="16" height="14"><path d="M1 13V5l3-3 2 0v10zM15 12V4l-3-3-2 1v9z" fill="#e3e3e3" stroke="#b5b5b5"/><path d="M8.500 0v14" stroke="#777"/></svg><i></i>
      </div></div>
      <h2>Pattern</h2>
    </div>

    <div class="group orient">
      <div class="body">
        <div class="big"><svg width="30" height="30"><rect x=".7" y=".7" width="28.600" height="25.600" fill="url(#lb)" stroke="#2a66bf" stroke-width="1.400"/><path d="M0 0h30v4H0z" fill="#2060bd"/><path d="M4 7h22v16H4z" fill="none" stroke="#7ea7d8" stroke-dasharray="2 1"/><path d="M25 4v3M23.500 6h3M4 22v3" stroke="#163370" stroke-width="1.500"/><path d="M20 20l8 8" stroke="#b36b2c" stroke-width="4"/><circle cx="14.500" cy="14.500" r="7.500" fill="#c2e4fb" stroke="#6a8db6" stroke-width="2"/></svg><span>Zoom<br>Area</span></div>
        <div class="big"><svg width="30" height="27"><use href="#fitwin"/></svg><span>Fit</span></div>
        <div class="grid">
          <svg width="16" height="16"><use href="#mag"/><path d="M4 5.500h5M6.500 3v5M4 9h5" stroke="#163370"/></svg>
          <svg width="16" height="16"><path d="M6 2l3-2h7v7l-3 3H6z" fill="url(#mb)"/><path d="M6 2h7v8H6z" fill="#4ba8e8"/><path d="M1 9h6v6H1z" fill="#a3d3f2" stroke="#5b93bd"/><path d="M2 7V3h3" fill="none" stroke="#222"/></svg>
          <svg width="16" height="15"><path d="M.5.500h9v7h-9z" fill="#f4f4f4" stroke="#777"/><path d="M0 1h10" stroke="#777" stroke-width="2"/><path d="M3.500 4v8h3" fill="none" stroke="#222"/><path d="M6.500 5.500h9v8h-9z" fill="#d9edfc" stroke="#2355b4"/><path d="M6 6h10" stroke="#2355b4" stroke-width="2"/></svg>
          <svg width="16" height="16" viewBox="0 0 17 16"><use href="#handwin" width="18" height="16"/></svg>
          <svg width="16" height="16"><ellipse cx="8" cy="13" rx="7.500" ry="2.800" fill="#8ec8f5" stroke="#2d80cc"/><path d="M8 0v14" stroke="#f21414" stroke-width="1.500"/><path d="M13 2q3 2-1 4M6 3Q0 3 1 6q1 2 6 2" fill="none" stroke="#24478c" stroke-width="1.500"/><path d="M11 4v4l-3-1.500zM7 5v5l3-2z" fill="#24478c"/></svg>
          <svg width="16" height="16"><path d="M8 0v16M0 8h16" stroke="#4c7ca8" stroke-width="3"/><path d="M3 5l3-2h7v8l-3 2H3z" fill="#c9cfd4" stroke="#848d94"/><path d="M3 5h7v8H3z" fill="#e5e8ea"/></svg>
          <svg width="16" height="16"><use href="#recycle"/></svg>
          <svg width="16" height="16"><path d="M1 3.500h13v12H1z" fill="url(#lb)" stroke="#1f5fc0" stroke-width="1.400"/><path d="M0 3h14v2.500H0z" fill="#2060bd"/><path d="M5 6q3-1 5 1l5-6 1 1-4 6q-4 3-7-2z" fill="#dc9a3a" stroke="#754310" stroke-width=".6"/></svg>
          <i></i>
        </div>
      </div>
      <h2>Orient</h2>
    </div>

    <div class="group style">
      <div class="body"><div class="big"><svg width="16" height="16"><path d="M1 3.500h14v12H1z" fill="#f7fbff" stroke="#1f5fc0" stroke-width="1.400"/><path d="M0 3h8" stroke="#1f5fc0" stroke-width="2.500"/><path d="M2 12l3-5 1 5M3 10.500h3" fill="none" stroke="#163370" stroke-width="1.200"/><path d="M8 11.500h2.500V14H8z" fill="#e22"/><path d="M11 11.500h3V14h-3z" fill="#1fb52b"/><path d="M6 7q2-2 5-1l4-6 1 4-4 5q-4 1-6-2z" fill="#b07636"/><path d="M11 4l4-4v4l-3 3z" fill="#2a6ec4"/></svg><span>Style</span><i class="arr"></i></div></div>
      <h2></h2>
    </div>

    <div class="group window">
      <div class="body"><div class="big"><svg width="33" height="33"><path d="M8.500.700h18v13h-18z" fill="url(#gr)" stroke="#777"/><path d="M8 1.500h19" stroke="#777" stroke-width="3"/><path d="M.500 6.500h18v13H.500z" fill="url(#gr)" stroke="#777"/><path d="M0 7.500h19" stroke="#777" stroke-width="3"/><path d="M10 17h22v15H10z" fill="url(#lb)" stroke="#2a5fc0" stroke-width="1.300"/><path d="M9.500 17.500h23" stroke="#2458b8" stroke-width="3"/></svg><span>Switch<br>Windows <i class="arr in"></i></span></div></div>
      <h2>Window</h2>
    </div>
  </section>

  <main class="work">
    <aside class="side left">
      <svg width="25" height="22"><path d="M1 1h14v18H1z" fill="#3f70b4" stroke="#1d4480" stroke-width="2"/><path d="M7 3h8v12H7z" fill="#8dbce8"/><path d="M12 9h12v12H12z" fill="#a9d2f5" stroke="#1d4480" stroke-width="2"/><path d="M15.500 12.500h6v4h-6z" fill="#fff" stroke="#1d4480" stroke-width="2"/></svg>
      <span class="vt">Feature Library</span>
      <svg width="25" height="22"><g fill="#7ebcf0" stroke="#1d4480" stroke-width="1.600"><path d="M10 1h8v5h6v9H10z"/><path d="M5 7h6v3h4v8H5z"/><path d="M1 12h5v3h5v5H1z"/></g></svg>
      <svg width="24" height="19"><path d="M4 4h18v14H4z" fill="#cfe3f7" stroke="#1d4480" stroke-width="2"/><path d="M1 1h18v13H1z" fill="#f4faff" stroke="#1d4480" stroke-width="1.600"/><path d="M4 7l4-4" stroke="#e33" stroke-width="2"/><circle cx="9.500" cy="9.500" r="2.600" fill="none" stroke="#189a45" stroke-width="1.800"/><path d="M13 3h4v4h-4z" fill="#b9dcf8" stroke="#4c86c4"/></svg>
      <svg width="25" height="22"><path d="M0 0h25v22H0z" fill="#1d4480"/><path d="M1 2h23v12H1z" fill="url(#rainbow)"/><path d="M1 20v-5q11-14 23 0v5z" fill="#e8f2fb" stroke="#1d4480"/><path d="M5 11l8 9" stroke="#c4273a" stroke-width="2.500"/><path d="M6 16l1 1M10 12v1M15 12v1M19 15l-1 1" stroke="#1d4480"/></svg>
      <svg width="25" height="22"><path d="M1 1h23v14H1z" fill="#e6eef6" stroke="#1d4480" stroke-width="2"/><circle cx="12.500" cy="8" r="4.500" fill="#fff" stroke="#b5c0cc"/><path d="M11 5.500l4 2.500-4 2.500z" fill="#222"/><path d="M0 17h25v5H0z" fill="#2b579a"/><path d="M2 19.500h4M9 19.500h6M17 19.500h3M22 19.500h2" stroke="#a9d2f5" stroke-width="2"/></svg>
      <svg width="20" height="20"><path d="M1 1h18v18H1z" fill="url(#heat)" stroke="#2b3f86" stroke-width="1.600"/></svg>
      <svg width="25" height="22"><path d="M1 1h18v18H1z" fill="url(#heat)" stroke="#2b3f86" stroke-width="1.600"/><path d="M10 5h14v16H10z" fill="#fff" stroke="#1d4480" stroke-width="1.600"/><path d="M12 9.500h3M12 14.500h3" stroke="#1d4480" stroke-width="2.200"/><path d="M16.500 9h5M16.500 11h5M16.500 14h5M16.500 16h5" stroke="#4b8fd8"/></svg>
      <svg width="21" height="22"><path d="M12 9Q10 15 5 17" fill="none" stroke="#b57a08" stroke-width="5.500"/><circle cx="15.500" cy="6" r="4.300" fill="#fffbe0" stroke="#b57a08" stroke-width="2.500"/><circle cx="15.500" cy="6" r="4" fill="#fffbe0" stroke="#ffd338"/><circle cx="4" cy="18" r="2.600" fill="#ffe68a" stroke="#b57a08" stroke-width="1.500"/><path d="M12 9Q10 14 5 17" fill="none" stroke="#ffd338" stroke-width="3"/></svg>
    </aside>

    <section class="center">
      <div class="docs">
        <div class="doc d1"><svg width="20" height="20"><use href="#part"/></svg><span>Magnifying glass Avatar.par</span><svg class="x" width="12" height="12"><use href="#cross"/></svg></div>
        <div class="doc d2"><svg width="20" height="20"><use href="#part"/></svg><span>Robot Avatar.par</span><svg class="x" width="12" height="12"><use href="#cross"/></svg></div>
        <div class="doc d3"><svg width="20" height="20"><use href="#part"/></svg><span>Truck Avatar.par</span><svg class="x" width="12" height="12"><use href="#cross"/></svg></div>
        <div class="doc d4"><svg width="20" height="20"><use href="#part"/></svg><span>Rocket Ship avatar.par</span><svg class="x" width="12" height="12"><use href="#cross"/></svg></div>
        <div class="doc d5"><svg width="20" height="20"><use href="#part"/></svg><span>V3 inside box 40%.par</span><svg class="x" width="12" height="12"><use href="#cross"/></svg></div>
        <div class="docnav">
          <svg width="7" height="12"><path d="M6.500 1v10L1 6z" fill="none" stroke="#6f7f98"/></svg>
          <svg width="7" height="12"><path d="M.5 1v10L6 6z" fill="none" stroke="#6f7f98"/></svg>
          <svg width="10" height="6"><path d="M0 0h10L5 5z" fill="#666"/></svg>
          <svg width="14" height="13"><path d="M1 1l12 11M13 1L1 12" stroke="#6b6b6b" stroke-width="2.500"/></svg>
        </div>
      </div>

      <div class="canvas">
        <svg class="drawing" viewBox="36 205 1848 767" width="1848" height="767">
          <path d="M631.500 466L710 371.500 790.500 466V665L810.500 727.500H781.500L711 665 654 729.500H622.500L631.500 665z" fill="url(#body)" stroke="#56c6f5"/>
          <g stroke="#006ee0" fill="none">
            <path d="M631.500 268v189M790.500 268v189M632 277.500h56M733 277.500h57M720 371.500h103M622.500 739v76M810.500 737v78M623 805.500h51M758 805.500h52"/>
          </g>
          <path d="M632 277.500l20-4v8zM790 277.500l-20-4v8zM623 805.500l20-4v8zM810 805.500l-20-4v8z" fill="#006ee0"/>
          <g stroke="#bd7800" fill="none">
            <path d="M631 467h159M631 665h159M641 459v15M720 459v15M711 657v15" stroke-width="2"/>
            <path d="M800 466.500h141M800 664.500h141M931.500 467v82M931.500 583v81"/>
            <path d="M626.500 461.500h10v10h-10zM645.500 461.500h10v10h-10zM626.500 659.500h10v10h-10z"/>
          </g>
          <path d="M931 467l-4 20h8zM931 664l-4-20h8z" fill="#bd7800" stroke="#bd7800" stroke-width=".6"/>
          <path d="M630 465h2v4h-2zM649 465h2v4h-2zM631 663h2v4h-2z" fill="#bd7800"/>
          <path d="M785.500 461.500h10v10h-10zM785.500 659.500h10v10h-10zM705.500 659.500h10v10h-10z" fill="none" stroke="#e80060"/>
          <path d="M789 465h2v4h-2zM789 663h2v4h-2zM710 663h2v4h-2z" fill="#f0006a"/>
          <g class="dimtext">
            <text x="711" y="287" fill="#006ee0">20</text>
            <text x="931" y="575" fill="#bd7800">25</text>
            <text x="716" y="815" fill="#006ee0">23.72</text>
          </g>
          <path d="M1769.500 857.500h69v69h-69z" fill="#fdfefe" stroke="#b9b9b9"/>
          <path d="M1804 890v-22" stroke="#9090ff" stroke-width="2"/><path d="M1804 860l-2.500 9h5z" fill="#8484f4"/>
          <path d="M1806 892h22" stroke="#ff9c9c" stroke-width="1.500"/><path d="M1836 892l-9-2v4z" fill="#ff8c8c"/>
          <circle cx="1804" cy="892" r="3.500" fill="#f2e21c" stroke="#c7b81d"/>
          <text class="front" x="1804.500" y="898" textLength="54">FRONT</text>
        </svg>

        <div class="tree">
          <div class="grip"></div>
          <div class="row r0"><span class="node n0"><svg width="15" height="15"><path d="M1 1h5v6h7v7H1z" fill="url(#cy)" stroke="#3030a8" stroke-width="2"/></svg><svg width="16" height="17"><path d="M3 6V4M1 5V2q1-1 3 0l1 5" fill="none" stroke="#b4801a" stroke-width="1.500"/><path d="M3.500 5.500v9h6" fill="none" stroke="#a85a30"/><path d="M6.500 7h8v9h-8z" fill="url(#ye)" stroke="#8c4a20"/><path d="M10.500 9v4" stroke="#b02010" stroke-width="2"/></svg><em>Rocket Ship avatar.par</em></span></div>
          <div class="row"><i class="ex plus"></i><i class="ck on"></i><span class="node n1"><svg width="18" height="17"><path d="M1 1v7M16 1v4M0 4.500h17" stroke="#1470b0" stroke-width="1.500"/><path d="M6 1l6 5M12 1L6 6" stroke="#e00010" stroke-width="2.500"/><circle cx="14" cy="10" r="2.500" fill="none" stroke="#2a2a90" stroke-width="1.500"/><path d="M7 16l5-2" stroke="#111" stroke-width="2"/></svg><em>PMI</em></span></div>
          <div class="row"><i class="ex no"></i><i class="ck on"></i><span class="node n2"><svg width="18" height="17"><path d="M2 1v14h14M2 15L9 6" fill="none" stroke="#0f67a8" stroke-width="1.400"/><path d="M7 6h3v3H7z" fill="#15406c"/><path d="M5 1h3M6.500 1v3M11 4l1.500 2L14 4M14 8l2 3M16 8l-2 3" fill="none" stroke="#8a1d8a"/></svg><em>Base</em></span></div>
          <div class="row"><i class="ex no"></i><i class="ck no"></i><span class="node n3"><svg width="19" height="17"><path d="M1 1h17v14H1z" fill="#eef7fd" stroke="#0f6aa8" stroke-width="1.500"/><path d="M6 2l3 3-1 5H4L3 5z" fill="#e08030"/><path d="M3 8h6v4H3z" fill="#3d83b8"/><path d="M11 6h5M11 11h5" stroke="#1d4480" stroke-width="1.500"/></svg><em>Material (None)</em></span></div>
          <div class="row"><i class="ex plus"></i><i class="ck"></i><span class="node n4 gray"><svg width="18" height="17"><path d="M1 2h15v12H1z" fill="#eef2fb" stroke="#6a7fd0" stroke-width="1.300"/><path d="M1 9h7v5" fill="#fff" stroke="#6a7fd0" stroke-width="1.300"/></svg><em>Base Reference Planes</em></span></div>
          <div class="row"><i class="ex"></i><i class="ck on"></i><span class="node n5"><svg width="18" height="17"><path d="M1 1h10v8H1z" fill="#dcd3f0" stroke="#7b5fc0" stroke-width="1.300"/><path d="M7 6h4v5h5v4H7z" fill="#8fb8f0" stroke="#3f63c0" stroke-width="1.300"/></svg><em>Design Bodies</em></span></div>
          <div class="row in1"><i class="ck on"></i><span class="node n6"><svg width="18" height="17"><path d="M3 1h8v5h5v7H3z" fill="#6f8ff0" stroke="#3556b8" stroke-width="1.300"/><path d="M1 7h5v4h5v5H1zM1 11.500h5V16" fill="#ffdd6b" stroke="#7c3d10" stroke-width="1.200"/></svg><em>Design Body_1</em></span></div>
          <div class="row"><i class="ex"></i><span class="sync"><svg width="16" height="16"><path d="M4 0v14M12 0v14" stroke="#fff" stroke-width="3"/><path d="M0 9h8l-4 7zM8 9h8l-4 7z" fill="#fff"/></svg><em>Synchronous</em><svg class="tri" width="20" height="12"><path d="M0 6L20 0v12z" fill="#fff3cf"/></svg></span></div>
          <div class="row in2"><i class="ex"></i><i class="ck no"></i><span class="node n7 bold"><svg width="18" height="17"><path d="M1 1h9v9H1z" fill="#b9dcf8" stroke="#1f5fa8" stroke-width="1.500"/><path d="M6 6h9v9H6z" fill="#cfe8fb" stroke="#2424a0" stroke-width="1.500"/><path d="M6 6h4v4H6z" fill="#1d68c0"/></svg><em>Features</em></span></div>
          <div class="row in3"><span class="node n8 bold"><svg width="17" height="17"><path d="M1 1h15v13H1z" fill="none" stroke="#f03030" stroke-width="1.300"/><path d="M5 4h11v10H5z" fill="#5a7fb8"/><path d="M8 7h9v8H8z" fill="url(#mb)" stroke="#3b5f9c"/></svg><em>Protrusion 1</em></span></div>
          <div class="row in2"><i class="ex plus"></i><i class="ck on"></i><span class="node n9 bold"><svg width="18" height="16"><use href="#sketch"/></svg><em>Sketches</em></span></div>
          <div class="row in2"><i class="ex plus"></i><i class="ck no"></i><span class="node n10 bold"><svg width="18" height="16"><use href="#sketch"/></svg><em>Used Sketches</em></span></div>
        </div>
      </div>

      <div class="prompt">
        <svg width="26" height="11"><path d="M.5.500h25v10H.500z" fill="#dfeaf6" stroke="#2b579a"/><path d="M0 1.500h26" stroke="#2b579a" stroke-width="3"/><path d="M3 7h5M9 7h2M12 7h5M20 7h3" stroke="#2b579a" stroke-width="2.500" stroke-dasharray="2 .6"/></svg>
        <span class="pb">PromptBar</span>
        <div class="ptext">Select geometry, click on a ‘Region’ to extrude or revolve, or click on 'Solids' commands to create 3D features.</div>
        <div class="pctl">
          <b class="a1">A</b><svg class="c1" width="5" height="3"><path d="M0 3h5L2.500 0z"/></svg>
          <b class="a2">A</b><svg class="c2" width="5" height="3"><path d="M0 0h5L2.500 3z"/></svg>
          <svg class="c3" width="9" height="10"><path d="M.5 4.500l4-3.500 4 3.500M.5 9.500l4-3.500 4 3.500" fill="none" stroke="#000" stroke-width="1.300"/></svg>
          <svg class="c4" width="12" height="11"><path d="M0 1h12" stroke="#000" stroke-width="2"/><path d="M0 4.500h12L6 11z"/></svg>
          <svg class="c5" width="9" height="13"><path d="M2.500 7.500V.500h4v7M0 8h9M4.500 8v5" fill="none" stroke="#000" stroke-width="1.200"/><path d="M6 1v7" stroke="#000" stroke-width="1.500"/></svg>
          <svg class="c6" width="10" height="10"><path d="M1 1l8 8M9 1L1 9" stroke="#000" stroke-width="1.900"/></svg>
        </div>
      </div>
    </section>

    <aside class="side right">
      <svg width="20" height="20"><circle cx="10" cy="10" r="9" fill="#2f62b5" stroke="#1d4480" stroke-width="1.500"/><path d="M6.500 8q0-4 3.500-4t3.500 3q0 2-3.500 4v1" fill="none" stroke="#fff" stroke-width="2.500"/><path d="M8.500 13.500h3V16h-3z" fill="#fff"/></svg>
      <span class="yt"><b>You</b><b>Tube</b></span>
      <svg width="23" height="22"><path d="M.5.500h22v21H.500z" fill="#386aaf" stroke="#1d4480"/><path d="M1 14h21v7H1z" fill="#4d82c2"/><path d="M19 3.500h-3q-3 0-3 4V22M8 11.500h11" fill="none" stroke="#fff" stroke-width="3.500"/></svg>
      <svg width="25" height="22"><path d="M1 1h23v20H1z" fill="#eef5fc" stroke="#1d4480" stroke-width="2"/><path d="M9 5H5v3h3v3H4" fill="none" stroke="#c77426" stroke-width="2"/><path d="M10 6h5M16 6h5M10 9h5M16 9h5M4 14.500h5M10 14.500h5M16 14.500h5M4 17.500h5M10 17.500h5M16 17.500h5" stroke="#7ba4d4"/></svg>
      <svg class="req" width="18" height="25"><path d="M.700 3.700h16.600v20.600H.700z" fill="#fff" stroke="#1d6aa8" stroke-width="1.400"/><path d="M3 3h3V.700h6V3h3v3H3z" fill="#fff" stroke="#c9830f" stroke-width="1.800"/><path d="M2.500 8.500h3v3h-3zM2.500 14h3v3h-3zM7 11.500h9M9 15.500h7M4 21.500h12" fill="none" stroke="#1d6aa8"/><path d="M3 17l3 3 6-7" fill="none" stroke="#16b80f" stroke-width="3"/></svg>
      <span class="vt">Requirements</span>
    </aside>
  </main>

  <footer class="status">
    <span class="count">0 items are selected</span>
    <span class="find">Find a command</span>
    <div class="sicons">
      <svg width="20" height="16"><path d="M0 14V8q0-3 4-3h7V1l8 6-8 6V9H6q-3 0-3 5z" fill="#fff"/></svg>
      <svg width="20" height="20"><path d="M1 1h18v17H1z" fill="#dcedfb" stroke="#7fb0e8"/><path d="M0 0h20v3H0z" fill="#4c8be0"/><path d="M3 7V5h2M15 5h2v2M3 15v1h2" fill="none" stroke="#163370"/><path d="M13 13l5 6" stroke="#c0702a" stroke-width="3"/><circle cx="10.500" cy="10" r="4.500" fill="#c8e6fa" stroke="#5884b4" stroke-width="1.500"/></svg>
      <svg width="19" height="20" viewBox="0 0 16 16"><use href="#mag"/><path d="M4 8.500h5M6.500 3v4M5 5h3" stroke="#163370"/></svg>
      <svg width="18" height="18" viewBox="0 0 30 27" preserveAspectRatio="none"><use href="#fitwin"/></svg>
      <svg width="20" height="20" viewBox="0 0 17 16"><use href="#handwin" width="18" height="16"/></svg>
      <svg width="18" height="18" viewBox="0 0 16 16"><use href="#recycle"/></svg>
      <svg width="20" height="20"><path d="M0 9l7-6v3l8-4-2 5 5 1-3 5-6-1v5z" fill="#9fc9f3" stroke="#5b97dc"/><path d="M10 6l6 2-3 6z" fill="#6ba5e2"/><path d="M11 19l4-5 4 5z" fill="#25c81e"/></svg>
      <svg width="20" height="18"><path d="M4 1h15v13H4z" fill="#cfe6fa" stroke="#6aa7e8"/><path d="M0 5h14v12H0z" fill="#f5ea14" stroke="#c7b81d"/><path d="M3 7h6L7 9l4 4-2 2-4-4-2 2z" fill="#109a18" stroke="#0b5c0b" stroke-width=".5"/></svg>
      <svg width="20" height="20"><path d="M1 1h11v11H1z" fill="#2b579a" stroke="#5f9be0" stroke-width="1.300"/><path d="M6 7h14v13H6z" fill="url(#ye)" stroke="#f2b01a"/></svg>
      <svg width="19" height="19"><circle cx="9.500" cy="9.500" r="8.500" fill="#f1f4f8" stroke="#b4bfcc"/><path d="M4 9.500h11" stroke="#333" stroke-width="2.500"/></svg>
      <svg class="slider" width="142" height="20"><path d="M0 12.500h142" stroke="#fff"/><path d="M60 1h12v14l-6 4-6-4z" fill="#5a80b4" stroke="#dfe8f3" stroke-width="1.300"/><path d="M66 5v9" stroke="#dfe8f3"/></svg>
      <svg class="plus" width="19" height="19"><circle cx="9.500" cy="9.500" r="8.500" fill="#f1f4f8" stroke="#b4bfcc"/><path d="M4 9.500h11M9.500 4v11" stroke="#333" stroke-width="2.200"/></svg>
      <svg width="20" height="20"><circle cx="10" cy="10" r="8.700" fill="#b03a3a" stroke="#c7b0b0" stroke-width="1.600"/><circle cx="10" cy="10" r="6" fill="#e01818"/></svg>
      <svg width="18" height="20"><path d="M9 0l9 9h-4v6H4V9H0z" fill="#33d80c" stroke="#178a08" stroke-width=".7"/><path d="M2 18h14" stroke="#f2e9e4" stroke-width="3"/></svg>
    </div>
  </footer>
</div>
</body>
</html>
```
FILE: styles.css
```css
* { box-sizing: border-box; margin: 0; padding: 0; }
body { width: 1920px; height: 1030px; overflow: hidden; background: #fff; color: #444; font-family: "Noto Sans", "Open Sans", sans-serif; font-size: 12.3px; }
svg { display: block; flex: none; }
.defs { position: absolute; }
em { font-style: normal; }
i { display: block; }
.app { position: relative; display: flex; flex-direction: column; height: 1030px; }

/* title bar */
.title { height: 33px; display: flex; position: relative; }
.title h1 { position: absolute; left: 0; right: 0; top: 5px; text-align: center; font-weight: 400; font-size: 14.25px; line-height: 24px; color: #444; }
.quick { display: flex; align-items: center; padding: 2px 0 0 64px; height: 32px; }
.q-sep { width: 1px; height: 27px; background: #ddd; margin: 0 8px; }
.quick .arr { width: 22px; }
.q-more { margin: -8px 0 0 14px; }
.winctl { margin-left: auto; display: flex; align-items: center; gap: 24px; padding: 4px 12px 0 0; }
.logo { position: absolute; left: 9px; top: 8px; z-index: 2; }

.arr { width: 14px; height: 5px; background: #777; clip-path: polygon(50% 100%, calc(50% - 3px) 0, calc(50% + 3px) 0); align-self: center; }
.arr.light { background: #999; }
.arr.in { display: inline-block; width: 6px; height: 4px; vertical-align: 4px; }

/* ribbon tabs */
.tabs { height: 31px; display: flex; padding-left: 90px; border-bottom: 1px solid #d4d4d4; position: relative; }
.tabs a { line-height: 36px; text-align: center; white-space: nowrap; width: 92px; }
.tabs a.on { width: 69px; height: 31px; line-height: 35px; color: #2b579a; background: #fff; border: 1px solid #d4d4d4; border-bottom: 0; }
.tabs .t2 { width: 93px; }
.tabs .t3 { width: 109px; } .tabs .t4 { width: 91px; } .tabs .t5 { width: 57px; } .tabs .t6 { width: 98px; }
.tabs .t7 { width: 141px; } .tabs .t8 { width: 155px; } .tabs .t9 { width: 77px; } .tabs .t10 { width: 67px; } .tabs .t11 { width: 63px; } .tabs .t12 { width: 144px; }
.siemens { margin-left: 385px; color: #009999; font: 800 20px/30px "Open Sans", sans-serif; width: 92px; }
.mdi { display: flex; align-items: center; gap: 11px; margin-left: auto; padding-right: 6px; }
.help { width: 14px; height: 16px; background: #999; color: #fff; font: bold 13px/16px "Liberation Sans", sans-serif; text-align: center; }

/* ribbon */
.ribbon { height: 106px; display: flex; padding-top: 6px; border-bottom: 1px solid #d4d4d4; }
.group { position: relative; height: 90px; background: linear-gradient(#ddd, #ddd) right 2px / 1px 88px no-repeat; }
.group .body { height: 75px; display: flex; }
.group h2 { font-weight: 400; font-size: 12.7px; line-height: 15px; height: 15px; margin-top: -1px; text-align: center; color: #7a7a7a; white-space: nowrap; }
.grid { display: grid; grid-template-rows: repeat(3, 25px); place-items: center; }
.grid > svg { margin-top: -1px; }
.grid > .arr { place-self: center stretch; width: auto; }
.vs { width: 1px; height: 75px; background: #ddd; margin: 0 4px 0 3px; flex: none; }
.big { width: 53px; height: 75px; display: flex; flex-direction: column; align-items: center; padding-top: 4px; text-align: center; flex: none; }
.big > svg { height: 33px; overflow: visible; }
.big > span { line-height: 14px; margin-top: 9px; white-space: nowrap; }
.big > .arr { margin: auto 4px 2px 0; width: 8px; height: 4px; }
.big.dim { color: #b4b4b4; }
.clip { width: 109px; padding-left: 10px; }
.clip .big { padding-top: 3px; width: 54px; }
.clip .big > span { margin-top: 10px; }
.clip .grid { grid-template-columns: 25px 14px; }
.clip h2 { padding-right: 6px; }
.sel { width: 93px; padding-left: 9px; }
.sel .big { padding-top: 4px; }
.sel .grid { grid-template-columns: 25px; }
.sel h2 { margin-left: -9px; padding-right: 0; }
.hot { background: #c1d4f1; }
.planes { width: 49px; padding-left: 9px; }
.planes .grid { grid-template-columns: 25px 10px; margin-left: 1px; }
.planes h2 { margin-left: -8px; }
.draw { width: 229px; }
.draw .body { padding-left: 8px; }
.draw .grid { grid-template-columns: repeat(4, 25px 14px); }
.draw .two { grid-template-columns: 25px 25px; }
.draw h2 { padding-left: 4px; }
.relate { width: 148px; }
.relate .body { padding-left: 9px; }
.relate .vs { margin-left: 2px; }
.relate .grid { grid-template-columns: repeat(4, 25px); }
.relate .one, .dimn .one { grid-template-columns: 25px; }
.relate h2 { padding-left: 1px; }
.hl { width: 25px; height: 25px; background: #c1d4f1; display: grid; place-items: center; }
.dimn { width: 204px; }
.dimn .body { padding-left: 9px; }
.dimn .big { width: 66px; }
.dimn .big > svg { margin-left: -2px; }
.dimn .grid { grid-template-columns: 25px 14px 25px 25px; }
.dimn .serif { grid-template-columns: 25px; font-family: "Liberation Serif", serif; color: #1f4c84; }
.dimn h2 { padding-left: 2px; }
.fa { display: flex; line-height: 13px; color: #1a2a80; }
.fa b { font-size: 16px; font-style: italic; border-bottom: 1px solid; margin-top: 1px; }
.fa b:first-child { font-size: 9px; line-height: 7px; font-style: normal; border: 0; color: #222; margin-right: -2px; align-self: flex-start; }
.fb2 { display: flex; font-size: 17px; line-height: 20px; padding-left: 2px; }
.fb2.small { font-size: 13px; }
.fb2 svg { margin-top: 2px; fill: #1f4c84; }
.solids { width: 420px; }
.solids .body { padding-left: 9px; }
.solids .big { width: 53.1px; }
.solids .grid { grid-template-columns: 25px 6px; margin-left: -1px; }
.face { width: 115px; }
.face .body { padding-left: 10px; }
.face .grid { grid-template-columns: repeat(4, 24.500px); }
.ln svg { fill: #e6f2fc; stroke: #2f84d3; stroke-width: 1.2; overflow: visible; }
.pattern { width: 54px; }
.pattern .body { padding-left: 9px; }
.pattern .grid { grid-template: 33px 33px / 25px 14px; padding-top: 4px; }
.pattern h2 { padding-left: 1px; }
.orient { width: 196px; }
.orient .body { padding-left: 8px; }
.orient .big { padding-top: 6px; }
.orient .big > svg { height: 31px; }
.orient .big + .grid { grid-template-columns: repeat(3, 25px); margin-left: 0; }
.orient h2 { padding-left: 1px; }
.style { width: 56px; }
.style .big { padding-top: 8px; width: 58px; }
.style .big > svg { height: 28px; }
.style .big > span { margin-top: 8px; }
.style .big > .arr { margin: 13px 4px 0 0; }
.window { width: 87px; }
.window .big { width: 88px; padding-top: 3px; }
.window .big > span { margin-top: 10px; }

/* workspace */
.work { height: 835px; display: flex; }
.side { width: 36px; background: #f4f4f4; display: flex; flex-direction: column; align-items: center; }
.left { padding: 11px 6px 0 0; }
.vt { writing-mode: vertical-rl; font-family: "Liberation Sans", sans-serif; color: #2b579a; line-height: 20px; white-space: nowrap; }
.left .vt { font-size: 14.700px; height: 172px; padding-top: 3px; margin-bottom: 3px; }
.left > svg:nth-child(3), .left > svg:nth-child(4), .left > svg:nth-child(7) { margin-bottom: 23px; }
.left > svg:nth-child(5), .left > svg:nth-child(6) { margin-bottom: 21px; }
.left > svg:nth-child(8) { margin-bottom: 20px; }
.right { padding: 13px 0 0 5px; }
.right > :not(:last-child) { margin-bottom: 21px; }
.right > .req { margin-top: -2px; }
.right .vt { font-size: 14.700px; margin-top: -18px; }
.yt { width: 25px; height: 22px; font: bold 9px/10px "Liberation Sans", sans-serif; text-align: center; display: flex; flex-direction: column; background: #dfe8f5; color: #26374f; }
.yt b + b { background: #b52a1c; color: #fff; height: 12px; border: 1px solid #1d4480; letter-spacing: -.3px; }

.center { width: 1848px; display: flex; flex-direction: column; }
.docs { height: 35px; border-bottom: 1px solid #2b579a; display: flex; font-size: 14.25px; color: #808080; }
.doc { display: flex; align-items: center; height: 34px; padding-left: 21px; gap: 3px; position: relative; white-space: nowrap; }
.doc span { padding-top: 2px; }
.doc .x { margin-left: auto; color: #6b6b6b; margin-top: -1px; }
.d1 { width: 259px; } .d2 { width: 191px; }
.d2 { padding-left: 24px; } .d3 { padding-left: 24px; width: 184px; }
.d4 { background: #2b579a; color: #fff; width: 226px; margin-left: 5px; padding: 0 5px 0 19px; }
.d4 .x { color: #fff; }
.d5 { padding-left: 19px; width: 219px; }
.docnav { margin-left: auto; display: flex; align-items: center; gap: 11px; padding: 0 3px 3px 0; }
.docnav svg:nth-child(3) { margin: 2px -4px 0 -2px; }
.canvas { height: 767px; position: relative; background: #fafcfc; }
.drawing { position: absolute; left: 0; top: 0; }
.dimtext { font: 28px "Liberation Sans", sans-serif; text-anchor: middle; }
.front { font: 17px "Liberation Sans", sans-serif; fill: #757575; text-anchor: middle; }

.tree { position: relative; width: 320px; color: #111; }
.grip { width: 313px; height: 11px; border: 1px solid #8a8a8a; background: linear-gradient(#e2e2e2, #c2c2c2); position: relative; }
.grip::after { content: ""; position: absolute; left: 136px; top: 3px; width: 39px; height: 2px; background: repeating-linear-gradient(90deg, #3c5f9c 0 2px, transparent 2px 4px); }
.row { height: 20px; display: flex; align-items: center; padding-left: 20px; }
.r0 { padding-left: 6px; margin-top: 4px; height: 19px; }
.in1 { padding-left: 69px; } .in2 { padding-left: 49px; } .in3 { padding-left: 115px; }
.node { height: 18px; border: 1px solid #a6b8c0; background: linear-gradient(#fbfdfd, #dde6ea); display: flex; align-items: center; white-space: nowrap; line-height: 16px; }
.node svg { margin-right: 6px; }
.node svg:first-child { overflow: visible; }
.n0 { width: 185px; padding-left: 2px; } .n0 svg + svg { margin-right: 7px; } .n0 svg:first-child { margin-right: 5px; }
.n0 em { letter-spacing: .08px; }
.n1 { width: 55px; } .n2 { width: 60px; } .n3 { width: 125px; } .n3 svg { margin-right: 5px; } .n4 { width: 163px; } .n5 { width: 116px; }
.n6 { width: 118px; } .n7 { width: 85px; } .n8 { width: 109px; } .n8 svg { margin-right: 7px; } .n9 { width: 86px; } .n10 { width: 120px; }
.bold { font-weight: 700; color: #000; font-size: 12.2px; }
.gray { color: #808080; }
.ex { width: 11px; height: 11px; border: 1px solid #7f97ad; margin-right: 9px; background: linear-gradient(#111, #111) center / 5px 1px no-repeat, #f4f6f6; }
.ex.plus { background: linear-gradient(#111, #111) center / 5px 1px no-repeat, linear-gradient(#111, #111) center / 1px 5px no-repeat, #f4f6f6; }
.ex.no, .ck.no { visibility: hidden; }
.ck { width: 16px; height: 14px; border: 1px solid #456294; border-width: 1px 1px 2px 1px; margin-right: 7px; background: #fff; position: relative; }
.ck.on::after { content: ""; position: absolute; left: 5px; top: -1px; width: 4px; height: 8px; border: solid #14356c; border-width: 0 2.500px 2.500px 0; transform: rotate(40deg); }
.sync { width: 229px; height: 18px; border: 1px solid #e8a63a; background: linear-gradient(#ffcf75, #f9ae2e 50%, #fdd94d 75%, #ffe36a); display: flex; align-items: center; padding: 0 12px 0 7px; font-weight: 700; color: #000; }
.sync em { margin-left: 1px; font-size: 12.3px; }
.sync .tri { margin-left: auto; }

/* prompt bar */
.prompt { height: 33px; border-top: 1px solid #ccc; background: #fff; display: flex; align-items: center; padding-left: 5px; color: #2b579a; }
.prompt > svg { margin-top: 5px; }
.pb { font-size: 14.1px; margin: 4px 0 0 6px; width: 73px; }
.ptext { margin-left: 10px; margin-top: 4px; width: 1601px; height: 28px; border: solid #999; border-width: 1px 0 0 1px; padding-left: 2px; color: #111; font-size: 16.400px; line-height: 24px; white-space: nowrap; flex: none; }
.pctl { display: flex; align-items: center; flex: 1; padding-left: 11px; height: 36px; color: #000; }
.pctl b { font-family: "Liberation Serif", serif; }
.a1 { font-size: 20px; } .a2 { font-size: 13px; margin: 6px 0 0 3px; }
.c1, .c2 { margin-top: -14px; } .c2 { margin-top: -8px; }
.c3 { margin-left: 7px; } .c4 { margin-left: 8px; } .c5 { margin-left: 10px; } .c6 { margin-left: 11px; }

/* status bar */
.status { height: 25px; background: #2b579a; color: #fff; display: flex; align-items: center; }
.count { margin-left: 979px; width: 259px; font-size: 14px; letter-spacing: 0; padding-top: 3px; }
.find { width: 175px; height: 22px; align-self: flex-end; background: #fff; color: #b5b5b5; font-size: 13.2px; line-height: 22px; padding-left: 4px; }
.sicons { display: flex; align-items: center; padding: 1px 0 0 4px; gap: 8.800px; }
.sicons .slider { margin: 0 -5px; }
.sicons .plus { margin-right: -2px; }
.sicons svg:last-child { margin-left: 3px; }
```
